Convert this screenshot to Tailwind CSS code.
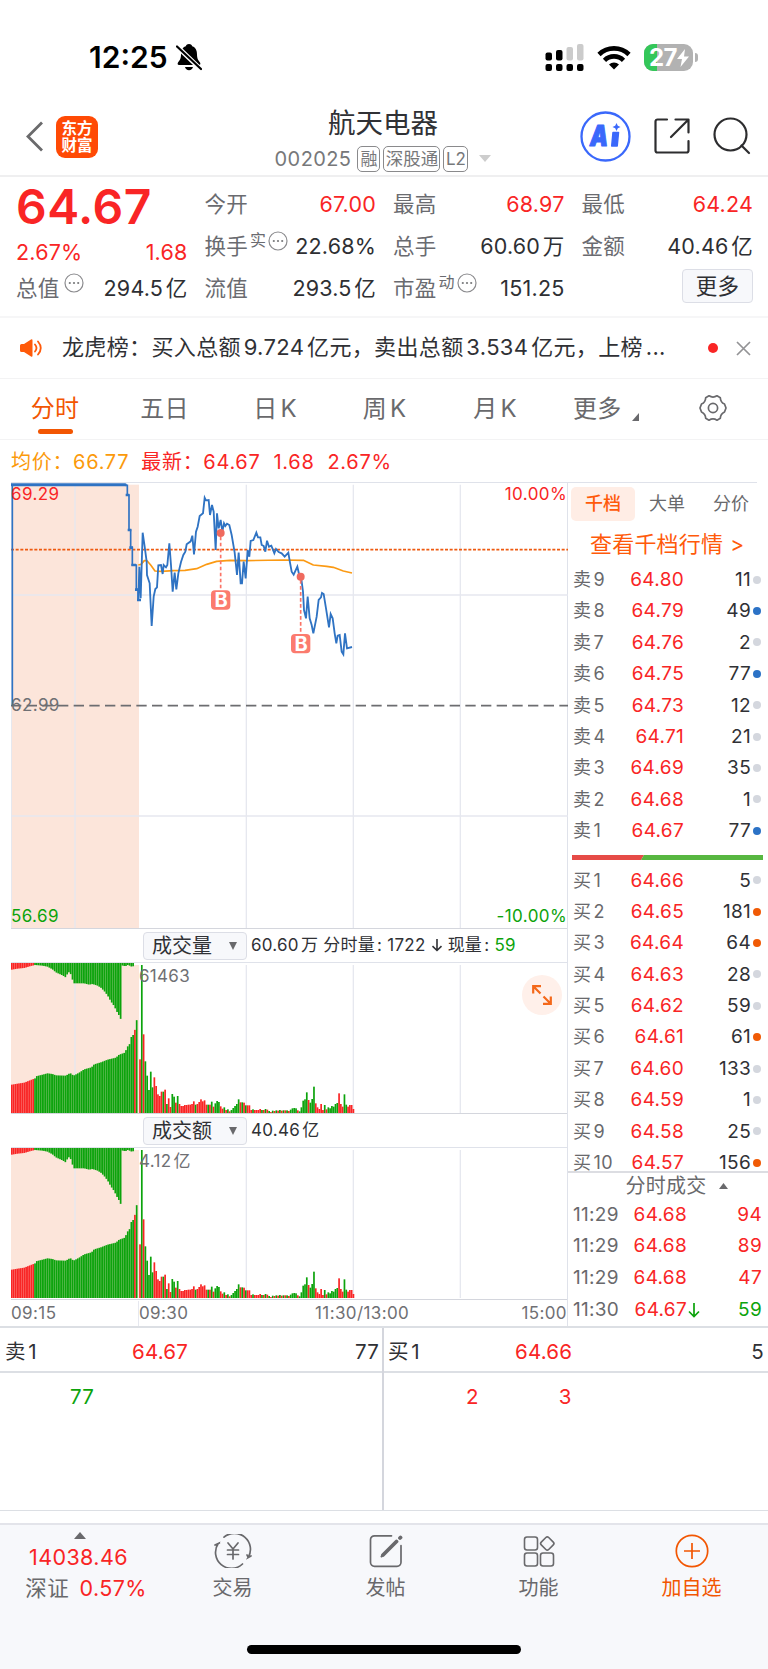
<!DOCTYPE html>
<html lang="zh-CN">
<head>
  <meta charset="UTF-8" />
  <meta name="viewport" content="width=device-width, initial-scale=1.0"/>
  <title>航天电器 002025</title>
  <script src="https://cdn.jsdelivr.net/npm/@tailwindcss/browser@4"></script>
</head>
<body class="bg-white">
<div class="w-[768px] h-[1669px] overflow-hidden flex flex-col bg-white text-[#303135] font-['Inter','Noto_Sans_CJK_SC',sans-serif] [text-autospace:normal] whitespace-nowrap">

  <!-- Status bar -->
  <div class="h-[98px] shrink-0 flex items-start justify-between pl-[89px] pr-[70px] pt-[37px] text-black">
    <div class="flex items-center gap-2 h-10">
      <span class="text-[30px] leading-none font-semibold">12:25</span>
      <svg class="w-[26px] h-[28px]" viewBox="0 0 26 28">
        <path d="M13 1c-2 0-3 1.200-3.200 2.300C6 4.500 5 8 5 11.500 5 16 3.500 17.500 2 19.500c-.8 1.200-.3 2.500 1 2.500h20c1.300 0 1.800-1.300 1-2.500-1.500-2-3-3.500-3-8 0-3.500-1-7-4.800-8.200C16 2.200 15 1 13 1z"/>
        <path d="M9 24h8c-.4 2-2 3.200-4 3.200S9.400 26 9 24z"/>
        <path d="M0 2.500 25 26.500" stroke="white" stroke-width="4.600"/>
        <path d="M1 3.500 25 26" stroke="black" stroke-width="2.200" stroke-linecap="round"/>
      </svg>
    </div>
    <div class="flex items-center h-10">
      <svg class="w-[39px] h-[27px] mr-[13px]" viewBox="0 0 39 27">
        <g fill="black">
          <rect x="0.500" y="8.500" width="6.500" height="8" rx="2"/><rect x="11" y="6" width="6.500" height="10.500" rx="2"/>
          <rect x="0.500" y="20" width="6.500" height="7" rx="2"/><rect x="11" y="20" width="6.500" height="7" rx="2"/>
          <rect x="21.500" y="20" width="6.500" height="7" rx="2"/><rect x="32" y="20" width="6.500" height="7" rx="2"/>
        </g>
        <g fill="#cbcbcb"><rect x="21.500" y="3" width="6.500" height="13.500" rx="2"/><rect x="32" y="0" width="6.500" height="16.500" rx="2"/></g>
      </svg>
      <svg class="w-[34px] h-[25px] mr-[13px]" viewBox="0 0 34 25">
        <g fill="none" stroke="black" stroke-width="4.600">
          <path d="M2 9.500a21.500 21.500 0 0 1 30 0"/><path d="M7.500 15.300a13.500 13.500 0 0 1 19 0"/>
        </g>
        <path d="M17 24.500l-5-5a7.200 7.200 0 0 1 10 0z"/>
      </svg>
      <div class="relative w-[49px] h-[27px] rounded-[9px] overflow-hidden bg-[#b2b2b2]">
        <div class="w-[13px] h-full bg-[#34c759]"></div>
        <span class="absolute left-[5px] top-0 text-[24px] leading-[27px] font-bold text-white tracking-[-0.5px]">27</span>
        <svg class="absolute left-[33px] top-[5px] w-[12px] h-[18px]" viewBox="0 0 12 18"><path d="M8 0 0 10h5L3.500 18 12 7.500H7z" fill="white"/></svg>
      </div>
      <div class="w-[3px] h-[9px] ml-[2px] rounded-r-full bg-[#b2b2b2]"></div>
    </div>
  </div>

  <!-- Title bar -->
  <header class="h-[79px] shrink-0 border-b-2 border-[#efeff0] flex items-center pl-[26px] pr-[15px]">
    <div class="flex items-center w-[247px] gap-[13px]">
      <svg class="w-[17px] h-[31px]" viewBox="0 0 17 31"><path d="M16 1.500 2 15.500 16 29.500" fill="none" stroke="#6a6a6c" stroke-width="2.800"/></svg>
      <div class="w-[42px] h-[42px] rounded-[9px] bg-[#ff4a05] text-white font-bold text-[15.500px] leading-[17px] text-center pt-[4px]">东方<br>财富</div>
    </div>
    <div class="flex flex-col items-center w-[220px] pt-[4px]">
      <h1 class="text-[27.500px] leading-[36px]">航天电器</h1>
      <div class="flex items-center h-[27px] mt-[4px] text-[#77787a] text-[20px] gap-[3px]">
        <span class="tracking-[0.400px] mr-[3px]">002025</span>
        <span class="h-[26px] leading-[24px] w-[23px] text-center text-[17px] border border-[#8a8a8c] rounded-[5px]">融</span>
        <span class="h-[26px] leading-[24px] w-[57px] text-center text-[17.500px] border border-[#8a8a8c] rounded-[5px]">深股通</span>
        <span class="h-[26px] leading-[24px] w-[25px] text-center text-[17px] border border-[#8a8a8c] rounded-[5px]">L2</span>
        <svg class="w-[12px] h-[7px] ml-[8px]" viewBox="0 0 12 7"><path d="M0 0h12L6 7z" fill="#cdcdcd"/></svg>
      </div>
    </div>
    <div class="flex items-center w-[173px] gap-[23px] shrink-0 ml-auto">
      <svg class="w-[51px] h-[51px]" viewBox="0 0 51 51">
        <circle cx="25.500" cy="25.500" r="24" fill="white" stroke="#3a68fb" stroke-width="2.300"/>
        <text x="10" y="35" font-size="28" font-weight="900" fill="#3a68fb" stroke="#3a68fb" stroke-width="1.200" stroke-linejoin="round" font-style="italic" textLength="18" lengthAdjust="spacingAndGlyphs">A</text>
        <path d="M33 21.500h5.500l-1.300 13.500h-5.500z" fill="#3a68fb" stroke="#3a68fb" stroke-width="1.500" stroke-linejoin="round"/>
        <path d="M36.500 12l1.300 2.700 2.700 1.300-2.700 1.300-1.300 2.700-1.300-2.700-2.700-1.300 2.700-1.300z" fill="#3a68fb"/>
      </svg>
      <svg class="w-[36px] h-[36px] -mt-[1px]" viewBox="0 0 36 36" fill="none" stroke="#2d2d2f" stroke-width="2.200" stroke-linecap="round" stroke-linejoin="round">
        <path d="M13 1.500H3.500a2 2 0 0 0-2 2v29a2 2 0 0 0 2 2h29a2 2 0 0 0 2-2V23"/><path d="M21.500 1.500h13v13M34 2 17 19"/>
      </svg>
      <svg class="w-[38px] h-[38px] -mt-[1px]" viewBox="0 0 38 38" fill="none" stroke="#2d2d2f" stroke-width="2.200" stroke-linecap="round"><circle cx="17.500" cy="17.500" r="16"/><path d="M28.500 28.500 36 36"/></svg>
    </div>
  </header>

  <!-- Quote summary -->
  <section class="h-[141px] shrink-0 border-b-2 border-[#f6f6f7] grid grid-cols-4 gap-x-[17px] pl-[16px] pr-[15px] pt-[6px] text-[21.500px] leading-[42px] tracking-[0.200px] text-[#2e2f33]">
    <div>
      <div class="text-[48px] h-[42px] leading-[47px] font-semibold text-[#f92525] tracking-[0.500px]">64.67</div>
      <div class="flex justify-between text-[#f92525] pt-[6px] h-[42px]"><span>2.67%</span><span>1.68</span></div>
      <div class="flex justify-between"><span class="text-[#6a6b70] flex gap-[5px]">总值<svg class="more w-[20px] h-[20px] mt-[6px]" viewBox="0 0 20 20"></svg></span><span>294.5亿</span></div>
    </div>
    <div>
      <div class="flex justify-between"><span class="text-[#6a6b70]">今开</span><span class="text-[#f92525]">67.00</span></div>
      <div class="flex justify-between"><span class="text-[#6a6b70] flex">换手<span class="text-[16px] leading-[30px] ml-[2px] mr-[2px]">实</span><svg class="more w-[20px] h-[20px] mt-[6px]" viewBox="0 0 20 20"></svg></span><span>22.68%</span></div>
      <div class="flex justify-between"><span class="text-[#6a6b70]">流值</span><span>293.5亿</span></div>
    </div>
    <div>
      <div class="flex justify-between"><span class="text-[#6a6b70]">最高</span><span class="text-[#f92525]">68.97</span></div>
      <div class="flex justify-between"><span class="text-[#6a6b70]">总手</span><span>60.60万</span></div>
      <div class="flex justify-between"><span class="text-[#6a6b70] flex">市盈<span class="text-[16px] leading-[30px] ml-[2px] mr-[2px]">动</span><svg class="more w-[20px] h-[20px] mt-[6px]" viewBox="0 0 20 20"></svg></span><span>151.25</span></div>
    </div>
    <div>
      <div class="flex justify-between"><span class="text-[#6a6b70]">最低</span><span class="text-[#f92525]">64.24</span></div>
      <div class="flex justify-between"><span class="text-[#6a6b70]">金额</span><span>40.46亿</span></div>
      <div class="flex justify-end pt-[2px]"><button class="w-[71px] h-[34px] leading-[30px] rounded-[4px] border border-[#dcdee6] bg-[#f7f8fb]">更多</button></div>
    </div>
  </section>

  <!-- News ticker -->
  <section class="h-[61px] shrink-0 border-b border-[#f3f3f4] flex items-center pl-[20px] pr-[17px]">
    <svg class="w-[22px] h-[18px]" viewBox="0 0 22 18"><path d="M0 6.500Q0 5 1.500 5H4l7-4.500q1.500-.8 1.500 1v15q0 1.800-1.500 1L4 13H1.500Q0 13 0 11.500z" fill="#ff5a0a"/><path d="M15 5.500q3 3.500 0 7M18 2.500q5.500 6.500 0 13" fill="none" stroke="#ff5a0a" stroke-width="1.800" stroke-linecap="round"/></svg>
    <span class="ml-[20px] -mt-[2px] text-[22px] tracking-[0.360px] w-[610px]">龙虎榜：买入总额9.724亿元，卖出总额3.534亿元，上榜...</span>
    <span class="w-[10px] h-[10px] rounded-full bg-[#f92525] ml-auto mr-[18px]"></span>
    <svg class="w-[15px] h-[15px]" viewBox="0 0 15 15"><path d="M1 1l13 13M14 1 1 14" stroke="#939396" stroke-width="1.700"/></svg>
  </section>

  <!-- Period tabs -->
  <nav class="h-[61px] shrink-0 border-b border-[#f3f3f4] flex items-start text-[24px] leading-[60px] tracking-[0.300px] text-[#69696c]">
    <div class="w-[110px] flex flex-col items-center text-[#f25602]"><span class="h-[50px]">分时</span><span class="w-[35px] h-[5px] rounded-full bg-[#f25602]"></span></div>
    <span class="w-[109px] text-center">五日</span>
    <span class="w-[112px] text-center">日K</span>
    <span class="w-[107px] text-center">周K</span>
    <span class="w-[114px] text-center">月K</span>
    <span class="ml-[21px] flex items-start">更多<svg class="w-[7px] h-[8px] ml-[10px] mt-[34px]" viewBox="0 0 7 8"><path d="M7 0v8H0z" fill="#69696c"/></svg></span>
    <svg class="w-[28px] h-[28px] ml-auto mr-[41px] mt-[15px]" viewBox="0 0 28 28" fill="none" stroke="#69696c" stroke-width="1.700" stroke-linejoin="round">
      <path d="M10 1.800q4 2.600 8 0l3.300 1.900q.2 4.600 4.200 6.300l1.500 4-1.500 4q-4 1.700-4.200 6.300L18 26.200q-4-2.600-8 0l-3.300-1.900q-.2-4.600-4.200-6.300L1 14l1.500-4q4-1.700 4.200-6.300z"/><circle cx="14" cy="14" r="4.600"/>
    </svg>
  </nav>

  <div class="h-[42px] shrink-0 flex items-center pl-[11px] pt-[1px] text-[20px] tracking-[0.700px] text-[#f92525]">
    <span class="text-[#fb9a0b] mr-[12px]">均价：66.77</span><span>最新：64.67</span><span class="ml-[13px]">1.68</span><span class="ml-[13px]">2.67%</span>
  </div>

  <div class="h-[844px] shrink-0 flex">
    <!-- Charts -->
    <div class="w-[557px] ml-[11px] flex flex-col border-t border-[#dfe2ea] border-r">
      <div class="relative h-[446px] shrink-0 border-b border-[#d4d6dd]">
        <svg class="w-[557px] h-[445px]" viewBox="33 339 1671 1335" fill="none">
          <rect x="33" y="344" width="384" height="1330" fill="#fce5da"/>
          <g stroke="#e6e8ef" stroke-width="4"><path d="M34 339V1674M225 344V1674M739 344V1674M1060 344V1674M1381 344V1674M33 675H1704M33 1338H1704"/></g>
          <path d="M33 1007H1704" stroke="#6c6d70" stroke-width="5" stroke-dasharray="31 16"/>
          <path d="M33 539H1704" stroke="#ee5a10" stroke-width="5" stroke-dasharray="9 5"/>
          <path d="M37 1007V344" stroke="#2f73c3" stroke-width="5"/>
          <path d="M35 344H376" stroke="#2f73c3" stroke-width="9" stroke-linecap="round"/>
          <path d="M376 346H382V375H387V480H392V533H397V585H409V659H414V691" stroke="#2f73c3" stroke-width="5"/>
          <path d="M377 375h11M383 480h11M388 533h11M394 585h14M405 659h11M411 690h12" stroke="#2f73c3" stroke-width="8"/>
          <polyline stroke="#fb9a14" stroke-width="5" stroke-linejoin="round" points="415,585 423,583 433,572 441,572 452,585 465,603 485,604 520,602 555,601 590,596 620,583 650,574 690,571 740,572 850,570 910,571 940,585 980,589 1000,592 1030,603 1056,609"/>
          <polyline stroke="#2f73c3" stroke-width="5.500" points="415,691 418,590 422,685 428,488 434,530 440,575 441,615 449,640 455,768 461,680 466,657 471,652 475,586 483,585 488,612 491,585 498,592 502,585 508,520 513,585 518,665 524,608 529,658 535,610 543,576 550,555 556,545 560,523 572,514 577,497 582,553 588,485 593,470 599,438 609,430 614,383 618,391 626,390 630,435 636,405 641,425 647,540 651,430 656,475 662,450 667,485 672,460 676,468 681,461 688,465 695,495 704,548 711,615 716,548 722,640 726,640 731,575 737,625 743,540 748,560 752,513 760,510 769,488 774,502 781,502 785,525 791,528 796,545 801,512 807,530 814,527 823,550 828,537 836,546 845,550 854,560 865,548 870,578 875,605 881,614 892,590 897,612 903,620 909,665 912,720 918,745 923,680 929,745 935,765 940,790 950,740 956,690 963,682 966,669 971,672 978,715 987,772 992,732 998,745 1004,790 1009,820 1013,797 1019,795 1025,845 1030,853 1035,790 1041,835 1056,831"/>
          <!-- Buy markers -->
          <path d="M662 500V660M902 630V792" stroke="#fb7467" stroke-width="5" stroke-dasharray="11 7"/>
          <g fill="#ef6a5e"><circle cx="662" cy="489" r="12"/><circle cx="902" cy="620" r="12"/></g>
          <g fill="#fb7b6e"><rect x="633" y="661" width="58" height="58" rx="12"/><rect x="873" y="792" width="58" height="58" rx="12"/></g>
          <g fill="white" font-size="60" font-weight="700" text-anchor="middle"><text x="663" y="711">B</text><text x="903" y="842">B</text></g>
        </svg>
        <div class="absolute inset-0 text-[17px] leading-[20px] tracking-[0.400px]">
          <span class="absolute left-0 top-[1px] text-[#f92525]">69.29</span>
          <span class="absolute right-0 top-[1px] text-[#f92525]">10.00%</span>
          <span class="absolute left-0 top-[212px] text-[#6f7074]">62.99</span>
          <span class="absolute left-0 bottom-[2px] text-[#0ca30c]">56.69</span>
          <span class="absolute right-0 bottom-[2px] text-[#0ca30c]">-10.00%</span>
        </div>
      </div>

      <div class="h-[34px] shrink-0 border-b border-[#dfe2ea] flex items-center pl-[132px] text-[17px]">
        <span class="w-[104px] h-[28px] rounded-[4px] border border-[#dcdee6] bg-[#f7f8fb] flex items-center justify-between pl-[8px] pr-[9px] text-[20px]">成交量<svg class="w-[8px] h-[8px]" viewBox="0 0 8 8"><path d="M0 0h8L4 8z" fill="#69696c"/></svg></span>
        <span class="ml-[4px] tracking-[0.250px]">60.60万 分时量: 1722 <svg class="inline-block w-[12px] h-[14px] -mt-[3px]" viewBox="0 0 12 14"><path d="M6 1v11.500M1.500 8.200 6 12.500l4.500-4.300" fill="none" stroke="#303135" stroke-width="1.600"/></svg> 现量: <span class="text-[#0ca30c]">59</span></span>
      </div>
      <div class="relative h-[151px] shrink-0 border-b border-[#d4d6dd]">
        <svg class="bars w-[557px] h-[150px]" viewBox="33 189 1671 450"></svg>
        <span class="absolute left-[128px] top-[3px] text-[17px] leading-[20px] text-[#6f7074] tracking-[0.300px]">61463</span>
        <div class="absolute left-[511px] top-[12px] w-[40px] h-[40px] rounded-full bg-[#fff0ea] flex items-center justify-center">
          <svg class="w-[20px] h-[20px]" viewBox="0 0 20 20" fill="none" stroke="#f4681a" stroke-width="2.200"><path d="M1.200 8.500V1.200H9M1.500 1.500 8.500 8.500M18.800 11.500v7.300H11M18.500 18.500l-7-7"/></svg>
        </div>
      </div>

      <div class="h-[34px] shrink-0 border-b border-[#dfe2ea] flex items-center pl-[132px] pt-[1px] text-[17px]">
        <span class="w-[104px] h-[28px] rounded-[4px] border border-[#dcdee6] bg-[#f7f8fb] flex items-center justify-between pl-[8px] pr-[9px] text-[20px]">成交额<svg class="w-[8px] h-[8px]" viewBox="0 0 8 8"><path d="M0 0h8L4 8z" fill="#69696c"/></svg></span>
        <span class="ml-[4px] tracking-[0.300px]">40.46亿</span>
      </div>
      <div class="relative h-[152px] shrink-0 border-b border-[#d4d6dd]">
        <svg class="bars w-[557px] h-[150px]" viewBox="33 189 1671 450"></svg>
        <span class="absolute left-[128px] top-[3px] text-[17px] leading-[20px] text-[#6f7074] tracking-[0.300px]">4.12亿</span>
      </div>
      <div class="flex-1 flex items-center text-[17px] text-[#6f7074] pt-[1px] tracking-[0.400px]">
        <span class="w-[127px]">09:15</span><span class="w-[177px] h-full border-l border-[#e6e8ef] flex items-center">09:30</span><span>11:30/13:00</span><span class="ml-auto">15:00</span>
      </div>
    </div>

    <!-- Order book -->
    <div class="flex-1 flex flex-col">
      <div class="h-[691px] shrink-0 overflow-hidden border-b-2 border-[#dcdde2]">
        <div class="h-[40px] mr-[11px] border-t border-[#dfe2ea] flex pt-[4px] pl-[3px] text-[18px] leading-[34px] text-[#69696c]">
          <span class="w-[64px] h-[34px] rounded-[5px] bg-[#ffede5] text-[#ff5a0a] font-medium text-center">千档</span>
          <span class="ml-[14px]">大单</span><span class="ml-[28px]">分价</span>
        </div>
        <div class="h-[42px] pl-[22px] text-[22px] leading-[45px] tracking-[0.200px] text-[#ff5a0a] flex">查看千档行情<span class="text-[21px] ml-[7px]">&gt;</span></div>
        <ul id="asks"></ul>
        <svg class="w-[191px] h-[5px] ml-[4px] mt-[8px] mb-[5px] block" viewBox="0 0 191 5"><path d="M0 0h72l-3 5H0z" fill="#e64b47"/><path d="M72 0h119v5H69z" fill="#57b740"/></svg>
        <ul id="bids"></ul>
      </div>
      <div class="h-[26px] shrink-0 flex items-center justify-center pl-[17px] gap-[12px] text-[20px] tracking-[0.300px] text-[#69696c]">分时成交<svg class="w-[9px] h-[6px]" viewBox="0 0 9 6"><path d="M0 6h9L4.500 0z" fill="#69696c"/></svg></div>
      <ul id="trades"></ul>
    </div>
  </div>

  <!-- Level-2 queue -->
  <section class="h-[185px] shrink-0 border-t-2 border-b border-[#dcdfe4] grid grid-cols-2 text-[20.500px] leading-[48px] tracking-[0.200px]">
    <div class="border-r-2 border-[#d4d6dd]">
      <div class="h-[45px] border-b-2 border-[#dcdfe4] flex pl-[5px] pr-[3px]"><span class="w-[127px]">卖1</span><span class="text-[#f92525]">64.67</span><span class="ml-auto">77</span></div>
      <div class="pl-[70px] text-[#0ca30c]">77</div>
    </div>
    <div>
      <div class="h-[45px] border-b-2 border-[#dcdfe4] flex pl-[4px] pr-[4px]"><span class="w-[127px]">买1</span><span class="text-[#f92525]">64.66</span><span class="ml-auto">5</span></div>
      <div class="flex pl-[82px] gap-[80px] text-[#f92525]"><span>2</span><span>3</span></div>
    </div>
  </section>

  <!-- Bottom bar -->
  <footer class="mt-[12px] flex-1 border-t-2 border-[#e3e4ea] bg-[#f7f8fb] flex flex-col items-center text-[#69696c]">
    <div class="grid grid-cols-5 w-full pl-[3px] h-[120px] shrink-0 text-[20px]">
      <div class="flex flex-col items-center pt-[7px] text-[21.500px] tracking-[0.400px]">
        <svg class="w-[12px] h-[7px]" viewBox="0 0 12 7"><path d="M0 7h12L6 0z" fill="#69696c"/></svg>
        <span class="leading-[32px] mt-[2px] -ml-[2px] text-[#f92525]">14038.46</span>
        <span class="leading-[30px] pl-[13px]">深证 <span class="ml-[4px] text-[#f92525]">0.57%</span></span>
      </div>
      <div class="flex flex-col items-center pt-[9px]">
        <svg class="w-[38px] h-[34px]" viewBox="0 0 38 34" fill="none" stroke="#69696c" stroke-width="1.700" stroke-linecap="round">
          <path d="M10 3.200A16 16 0 0 1 34.200 23.500L37 22M34.200 23.500l-1.200-2.500M28.500 30A16 16 0 0 1 4.200 9.500L1 11M4.200 9.500l1.200-.5"/><path d="M14 9l5 6 5-6M13.500 16h11M13.500 20.500h11M19 15v10"/>
        </svg>
        <span class="leading-[40px]">交易</span>
      </div>
      <div class="flex flex-col items-center pt-[9px]">
        <svg class="w-[34px] h-[34px]" viewBox="0 0 34 34" fill="none" stroke="#69696c" stroke-linecap="round">
          <path d="M22.500 1.800H5.500a4 4 0 0 0-4 4v22.500a4 4 0 0 0 4 4h22.500a4 4 0 0 0 4-4V11.500" stroke-width="1.700"/><path d="M14 21 27.500 7.500M31 4l.5-.5" stroke-width="3.800"/><path d="M12.500 22.500l3-3" stroke-width="2"/>
        </svg>
        <span class="leading-[40px]">发帖</span>
      </div>
      <div class="flex flex-col items-center pt-[9px]">
        <svg class="w-[34px] h-[34px]" viewBox="0 0 34 34" fill="none" stroke="#69696c" stroke-width="1.600">
          <rect x="2.500" y="3" width="13" height="13" rx="2.500"/><rect x="2.500" y="19" width="13" height="13" rx="2.500"/><rect x="18.500" y="19" width="13" height="13" rx="2.500"/><rect x="20" y="4.200" width="10.500" height="10.500" rx="2" transform="rotate(45 25.200 9.500)"/>
        </svg>
        <span class="leading-[40px]">功能</span>
      </div>
      <div class="flex flex-col items-center pt-[9px] text-[#f25602]">
        <svg class="w-[34px] h-[34px]" viewBox="0 0 34 34" fill="none" stroke="#f25602" stroke-width="1.700"><circle cx="17" cy="17" r="15.700"/><path d="M17 9v16M9 17h16"/></svg>
        <span class="leading-[40px]">加自选</span>
      </div>
    </div>
    <div class="w-[274px] h-[9px] rounded-full bg-black"></div>
  </footer>
</div>

<script>
  const RED = "#f92525", GREEN = "#0ca30c";

  document.querySelectorAll(".more").forEach(el => {
    el.innerHTML = `<circle cx="10" cy="10" r="9" fill="none" stroke="#8b8b8e" stroke-width="1.2"/>
      <g fill="#77787a"><circle cx="5.800" cy="10" r="1.100"/><circle cx="10" cy="10" r="1.100"/><circle cx="14.200" cy="10" r="1.100"/></g>`;
  });

  const dots = { g: "bg-[#d4d7de]", b: "bg-[#2b72c6]", o: "bg-[#f05a05]" };

  function renderBook(id, label, rows) {
    document.getElementById(id).innerHTML = rows.map(([n, price, qty, dot]) => `
      <li class="h-[31.400px] leading-[31.400px] flex items-center pl-[5px] text-[19px] tracking-[0.300px]">
        <span class="w-[50px] text-[18px] text-[#69696c]">${label}${n}</span>
        <span class="w-[61px] text-right text-[#f92525]">${price}</span>
        <span class="w-[67px] text-right">${qty}</span>
        <span class="w-[8px] h-[8px] ml-[2px] rounded-full ${dots[dot]}"></span>
      </li>`).join("");
  }

  renderBook("asks", "卖", [
    [9, "64.80", 11, "g"], [8, "64.79", 49, "b"], [7, "64.76", 2, "g"],
    [6, "64.75", 77, "b"], [5, "64.73", 12, "g"], [4, "64.71", 21, "g"],
    [3, "64.69", 35, "g"], [2, "64.68", 1, "g"], [1, "64.67", 77, "b"]
  ]);
  renderBook("bids", "买", [
    [1, "64.66", 5, "g"], [2, "64.65", 181, "o"], [3, "64.64", 64, "o"],
    [4, "64.63", 28, "g"], [5, "64.62", 59, "g"], [6, "64.61", 61, "o"],
    [7, "64.60", 133, "g"], [8, "64.59", 1, "g"], [9, "64.58", 25, "g"],
    [10, "64.57", 156, "o"]
  ]);

  document.getElementById("trades").innerHTML = [
    ["11:29", "64.68", 94], ["11:29", "64.68", 89], ["11:29", "64.68", 47], ["11:30", "64.67", 59, true]
  ].map(([time, price, qty, down]) => `
    <li class="h-[31.800px] flex items-center pl-[5px] pr-[6px] text-[19px] tracking-[0.300px]">
      <span class="w-[54px] text-[#69696c]">${time}</span>
      <span class="w-[60px] text-right text-[#f92525]">${price}</span>
      ${down ? `<svg class="w-[12px] h-[15px] ml-[1px]" viewBox="0 0 12 15"><path d="M6 0v13.500M1 8.500l5 5 5-5" fill="none" stroke="#0ca30c" stroke-width="1.700"/></svg>` : ""}
      <span class="ml-auto ${down ? "text-[#0ca30c]" : "text-[#f92525]"}">${qty}</span>
    </li>`).join("");

  // Call auction: matched volume rises from the bottom, unmatched hangs from the top
  const matched = [[33,554],[50,551],[70,548],[90,540],[103,535],[105,529],[125,524],[140,520],[155,522],[165,526],[195,527],[208,519],[218,527],[235,518],[250,508],[272,502],[280,493],[300,487],[320,479],[345,473],[355,464],[372,458],[380,440],[388,430],[392,408],[400,403],[404,378],[409,353]];
  const unmatched = [[33,209],[50,206],[70,204],[90,198],[103,195],[125,197],[140,200],[155,208],[165,217],[185,226],[196,233],[201,216],[208,218],[213,232],[218,250],[250,250],[265,254],[275,252],[290,257],[300,263],[310,273],[320,286],[330,304],[340,318],[347,333],[354,345],[360,358],[362,201],[367,193],[372,201],[380,194],[385,201],[388,190],[392,201],[396,196],[400,210]];
  // Per-minute bars from 09:30, r = up, g = down
  const minutes = "r161 g444 r236 g155 g112 g69 g124 g77 r107 r81 r56 r51 r64 g64 r70 g27 r44 r18 g57 g49 r31 g51 r27 r21 r21 r24 r24 r25 r25 r27 r35 g25 r27 r33 r41 r35 r38 r25 g25 r25 g34 r19 g29 g36 g33 r20 r13 g17 r9 g11 r5 g9 g15 g21 g27 g41 r32 g32 r31 g23 r23 r23 r9 g11 r9 r9 r9 r12 g9 r9 g12 r10 g6 r3 g7 r6 g8 r7 g9 r7 g8 r8 g8 r6 g10 g14 g15 g14 r8 g5 g17 g37 g41 g62 r39 g31 g42 g79 r29 r17 r12 r27 r9 g24 r11 g17 g14 g21 g19 g27 g30 r59 r27 r19 g56 g25 r19 r24 r24 r12".split(" ");

  function at(points, x) {
    for (let i = 1; i < points.length; i++) {
      const [x0, y0] = points[i - 1], [x1, y1] = points[i];
      if (x <= x1) return y0 + (y1 - y0) * (x - x0) / (x1 - x0);
    }
    return points[points.length - 1][1];
  }

  function bar(x, y, h, color) {
    return `<rect x="${x}" y="${y}" width="5.100" height="${h}" fill="${color}"/>`;
  }

  function drawBars() {
    let out = `<rect x="33" y="195" width="384" height="444" fill="#fce5da"/>
      <path d="M225 195V639M739 195V639M1060 195V639M1381 195V639" stroke="#e6e8ef" stroke-width="4"/>
      <rect x="33" y="189" width="368" height="6" fill="#fce5da"/>`;
    for (let i = 0; i < 71; i++) {
      const x = 33 + i * 5.35;
      const color = x < 102 ? RED : GREEN;
      const low = at(matched, x);
      out += bar(x, low, 639 - low, i === 69 ? RED : color);
      if (i < 69) out += bar(x, 189, at(unmatched, x) - 189, color);
    }
    minutes.forEach((m, i) => {
      const h = +m.slice(1);
      out += bar(417.5 + i * 5.38, 639 - h, h, m[0] === "r" ? RED : GREEN);
    });
    return out;
  }

  document.querySelectorAll(".bars").forEach(svg => svg.innerHTML = drawBars());
</script>
</body>
</html>
